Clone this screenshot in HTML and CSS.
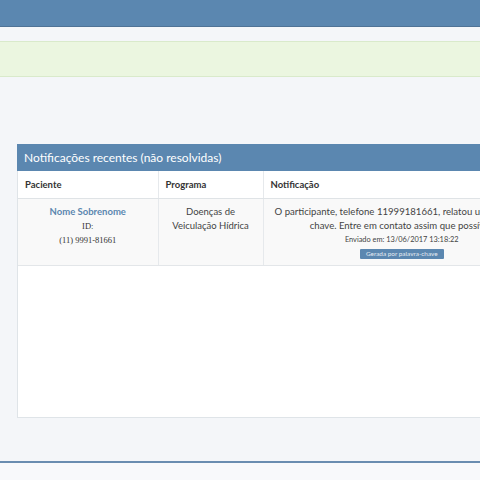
FILE: index.html
```html
<!DOCTYPE html>
<html lang="pt">
<head>
<meta charset="utf-8">
<link rel="stylesheet" href="styles.css">
</head>
<body>
<div class="topbar"></div>
<div class="alert"></div>
<main class="content">
  <section class="panel">
    <div class="panel-heading">Notificações recentes (não resolvidas)</div>
    <table class="grid">
      <thead>
        <tr>
          <th class="c1">Paciente</th>
          <th class="c2">Programa</th>
          <th class="c3">Notificação</th>
        </tr>
      </thead>
      <tbody>
        <tr>
          <td class="c1">
            <div class="name">Nome Sobrenome</div>
            <div class="serif">ID:</div>
            <div class="serif">(11) 9991-81661</div>
          </td>
          <td class="c2">Doenças de<br>Veiculação Hídrica</td>
          <td class="c3">
            <div class="msg">O participante, telefone 11999181661, relatou uma palavra-chave. Entre em contato assim que possível.</div>
            <div class="sent">Enviado em: 13/06/2017 13:18:22</div>
            <span class="badge">Gerada por palavra-chave</span>
          </td>
        </tr>
      </tbody>
    </table>
  </section>
</main>
<footer class="footer"></footer>
</body>
</html>
```
FILE: styles.css
```css
html, body {
  margin: 0;
  padding: 0;
}
body {
  background: #f4f6f9;
  font-family: "Lato", "Open Sans", sans-serif;
  color: #333;
  overflow: hidden;
  height: 480px;
}
.topbar {
  height: 26px;
  background: #5b87b0;
  border-bottom: 1px solid #4f7396;
}
.alert {
  margin-top: 14px;
  height: 34px;
  background: #ebf6e0;
  border-top: 1px solid #d9eacb;
  border-bottom: 1px solid #d9eacb;
}
.content {
  padding: 67px 0 0 17px;
}
.panel {
  width: 524px;
  height: 274px;
  background: #fff;
  border: 1px solid #dfe4e8;
  border-top: none;
  box-sizing: border-box;
}
.panel-heading {
  height: 27px;
  line-height: 27px;
  background: #5b87b0;
  color: #fff;
  font-size: 12px;
  padding-left: 7px;
  margin-left: -1px;
  margin-right: -1px;
}
.grid {
  width: 100%;
  border-collapse: collapse;
  table-layout: fixed;
}
.grid th, .grid td { box-sizing: border-box; }
.grid .c1 { width: 140px; }
.grid .c2 { width: 105px; }
.grid th {
  height: 27px;
  text-align: left;
  padding: 0 7px;
  font-size: 9.5px;
  font-weight: 700;
  color: #333;
  border-bottom: 1px solid #dfe3e6;
  border-left: 1px solid #e6e9ec;
}
.grid th.c1 { border-left: none; }
.grid td {
  background: #f9f9f9;
  text-align: center;
  vertical-align: top;
  height: 67px;
  padding: 6px 7px 0;
  font-size: 9.5px;
  line-height: 14px;
  color: #444;
  border-bottom: 1px solid #e3e6e9;
  border-left: 1px solid #e6e9ec;
}
.grid td.c1 { border-left: none; }
.name {
  color: #5b87b0;
  font-weight: 700;
}
.serif {
  font-family: "Liberation Serif", serif;
  font-size: 8.5px;
  color: #333;
}
.msg {
  font-size: 9.6px;
}
.sent {
  font-size: 7.4px;
  line-height: 12px;
  margin-top: 1px;
}
.badge {
  display: inline-block;
  background: #5b87b0;
  color: #e4ebf2;
  font-size: 6.4px;
  line-height: 10px;
  padding: 0 6px;
  margin-top: 1px;
  border-radius: 1px;
}
.footer {
  margin-top: 43px;
  height: 20px;
  border-top: 2px solid #6a8db0;
  background: #f8f9fb;
}
```
